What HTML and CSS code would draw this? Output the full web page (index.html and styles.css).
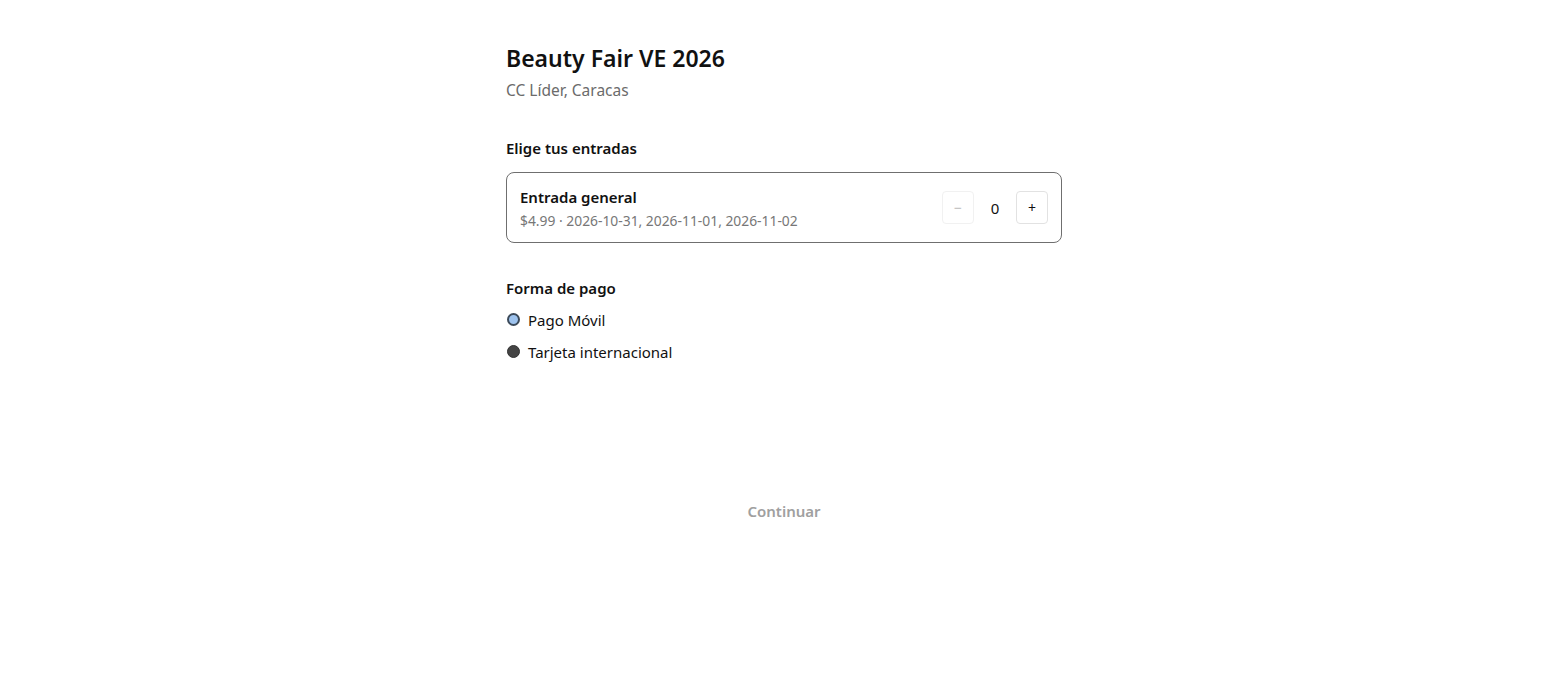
FILE: index.html
```html
<!DOCTYPE html>
<html lang="es">
<head>
<meta charset="utf-8">
<title>Beauty Fair VE 2026</title>
<link rel="stylesheet" href="styles.css">
</head>
<body>
<main class="page">
  <header class="event">
    <h1 class="event-title">Beauty Fair VE 2026</h1>
    <p class="event-venue">CC Líder, Caracas</p>
  </header>

  <section class="section">
    <h2 class="section-title">Elige tus entradas</h2>
    <div class="ticket">
      <div class="ticket-info">
        <div class="ticket-name">Entrada general</div>
        <div class="ticket-meta">$4.99 · 2026-10-31, 2026-11-01, 2026-11-02</div>
      </div>
      <div class="stepper">
        <button class="step-btn disabled" disabled>−</button>
        <span class="step-value">0</span>
        <button class="step-btn">+</button>
      </div>
    </div>
  </section>

  <section class="section pay">
    <h2 class="section-title">Forma de pago</h2>
    <label class="radio-row"><span class="radio radio-on"></span><span class="radio-label">Pago Móvil</span></label>
    <label class="radio-row"><span class="radio radio-off"></span><span class="radio-label">Tarjeta internacional</span></label>
  </section>

  <div class="actions">
    <button class="continue" disabled>Continuar</button>
  </div>
</main>
</body>
</html>
```
FILE: styles.css
```css
* { box-sizing: border-box; }
html, body { margin: 0; padding: 0; background: #fff; }
body {
  font-family: "Noto Sans", "Open Sans", sans-serif;
  color: #111;
}
.page {
  width: 556px;
  margin: 0 auto;
  padding-top: 42px;
}
.event-title {
  margin: 0;
  font-size: 23px;
  font-weight: 600;
  line-height: 32px;
}
.event-venue {
  margin: 5px 0 0;
  font-size: 15.5px;
  color: #6b6b6b;
  line-height: 22px;
}
.section { margin-top: 36px; }
.section-title {
  margin: 0 0 13px;
  font-size: 15px;
  font-weight: 600;
  line-height: 22px;
}
.ticket {
  display: flex;
  align-items: center;
  justify-content: space-between;
  border: 1px solid #6f6f6f;
  border-radius: 8px;
  padding: 13px;
  height: 71px;
}
.ticket-info { margin-top: 2px; }
.ticket-name {
  font-size: 15px;
  font-weight: 600;
  line-height: 22px;
}
.ticket-meta {
  margin-top: 2px;
  font-size: 13.85px;
  color: #777;
  line-height: 21px;
}
.stepper {
  display: flex;
  align-items: center;
}
.step-btn {
  width: 32px;
  height: 33px;
  border: 1px solid #e2e2e2;
  border-radius: 4px;
  background: #fff;
  font-family: inherit;
  font-size: 14px;
  color: #111;
  padding: 0;
}
.step-btn.disabled { border-color: #f1f1f1; color: #bbb; }
.step-value {
  width: 42px;
  text-align: center;
  font-size: 15px;
}
.pay { margin-top: 34px; }
.pay .section-title { margin-bottom: 5px; }
.radio-row {
  display: flex;
  align-items: center;
  gap: 8px;
  height: 32px;
}
.radio {
  width: 13px;
  height: 13px;
  border-radius: 50%;
  flex: none;
  margin-top: -2px;
  margin-left: 1px;
}
.radio-on { background: #9ec3ee; border: 2px solid #3c4a5a; }
.radio-off { background: #444; border: 1px solid #333; }
.radio-label { font-size: 15px; line-height: 22px; }
.actions {
  display: flex;
  justify-content: center;
  margin-top: 133px;
}
.continue {
  border: none;
  background: none;
  font-family: inherit;
  font-size: 15px;
  font-weight: 600;
  color: #a0a0a0;
  padding: 0;
}
```
